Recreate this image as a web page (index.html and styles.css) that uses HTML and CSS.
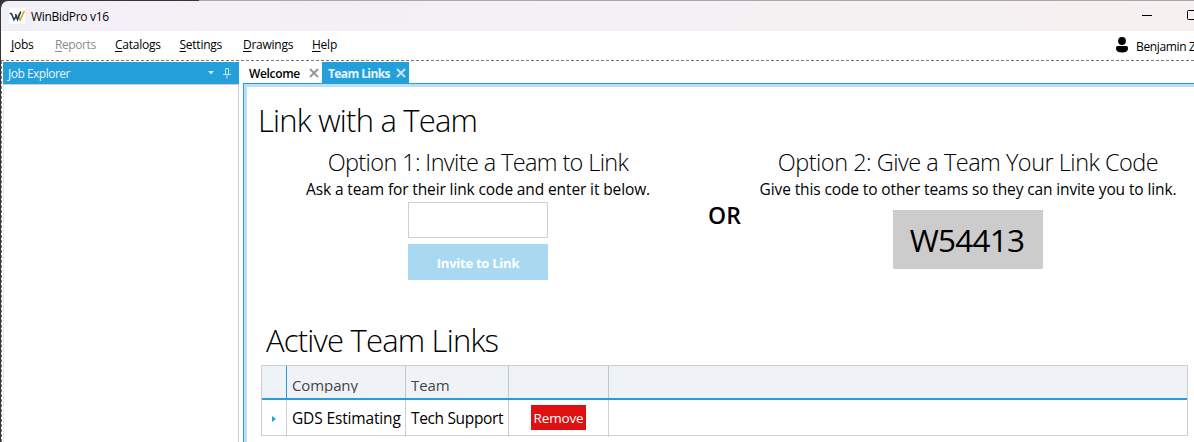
FILE: index.html
```
<!DOCTYPE html>
<html lang="en">
<head>
<meta charset="utf-8">
<title>WinBidPro v16</title>
<link rel="stylesheet" href="styles.css">
</head>
<body>
<div class="window">
  <header class="titlebar">
    <svg class="logo" width="16" height="16" viewBox="0 0 16 16"><rect width="16" height="16" fill="#fff"/><path d="M8.800 8.500l2.200 3.500L15.300 3M10.500 5.500l-1.500 3" fill="none" stroke="#d3ab1c" stroke-width="1.700"/><path d="M.7 5.500h1.600l2.700 6.300L7.700 7.200 M6.500 6l2 5.500L11.800 3.500" fill="none" stroke="#173c5c" stroke-width="1.600"/></svg>
    <span class="app-name"><span class="t">WinBidPro v16</span></span>
    <svg class="controls" width="52" height="30" viewBox="0 0 52 30" fill="none" stroke="#000"><path d="M0 14.500h10"/><rect x="45.500" y="9.500" width="9" height="9" rx="1"/></svg>
  </header>
  <nav class="menu">
    <a class="m-jobs"><u>J</u>obs</a>
    <a class="m-reports"><u>R</u>eports</a>
    <a class="m-catalogs"><u>C</u>atalogs</a>
    <a class="m-settings"><u>S</u>ettings</a>
    <a class="m-drawings"><u>D</u>rawings</a>
    <a class="m-help"><u>H</u>elp</a>
    <div class="user">
      <svg width="12" height="16" viewBox="0 0 12 16"><circle cx="6" cy="4" r="3.900"/><path d="M1.500 9h9q1.500 0 1.500 2.200Q12 15.500 6 15.500T0 11.200Q0 9 1.500 9z"/></svg>
      <span class="t">Benjamin Z</span>
    </div>
  </nav>
  <main class="workspace">
    <aside class="explorer">
      <div class="explorer-head">
        <span class="t">Job Explorer</span>
        <svg width="30" height="22" viewBox="0 0 30 22"><path d="M3 9h6l-3 3.500z" fill="#c3e5f7"/><path d="M20.500 12.500v-6h3v6M18 12.500h8M22 12.500v4M23.500 7v6" fill="none" stroke="#c3e5f7"/></svg>
      </div>
      <div class="explorer-body"></div>
    </aside>
    <section class="documents">
      <div class="tabs">
        <div class="tab"><span class="t">Welcome</span><svg width="10" height="10" viewBox="0 0 10 10"><path d="M1 1l8 8M9 1L1 9"/></svg></div>
        <div class="tab active"><span class="t">Team Links</span><svg width="10" height="10" viewBox="0 0 10 10"><path d="M1 1l8 8M9 1L1 9"/></svg></div>
      </div>
      <div class="page">
        <h1 class="title">Link with a Team</h1>
        <div class="options">
          <div class="option invite">
            <h2>Option 1: Invite a Team to Link</h2>
            <p>Ask a team for their link code and enter it below.</p>
            <input class="code-input" type="text" aria-label="Link code">
            <button class="invite-button">Invite to Link</button>
          </div>
          <div class="or">OR</div>
          <div class="option share">
            <h2>Option 2: Give a Team Your Link Code</h2>
            <p>Give this code to other teams so they can invite you to link.</p>
            <div class="code">W54413</div>
          </div>
        </div>
        <h1 class="title links-title">Active Team Links</h1>
        <div class="grid">
          <div class="row head"><div class="corner"></div><div><span class="clip">Company</span></div><div><span class="clip">Team</span></div><div></div><div></div></div>
          <div class="row body"><div class="marker"><svg width="4" height="6" viewBox="0 0 4 6"><path d="M0 0l4 3-4 3z" fill="#259fda"/></svg></div><div class="company">GDS Estimating</div><div class="team">Tech Support</div><div class="action"><button class="remove">Remove</button></div><div></div></div>
        </div>
      </div>
    </section>
  </main>
</div>
</body>
</html>
```
FILE: styles.css
```
* { box-sizing: border-box; }
body { margin: 0; width: 1194px; height: 442px; overflow: hidden; background: #37343a; font-family: "Open Sans", "Noto Sans", sans-serif; color: #000; }
h1, h2, p { margin: 0; font-weight: 300; white-space: nowrap; }
button, input { font-family: inherit; border: 0; padding: 0; }
.window { height: 442px; display: flex; flex-direction: column; margin-left: 1px; background: linear-gradient(90deg, #37343a 198px, #aaa7ae 198px); border-top-left-radius: 8px; overflow: hidden; padding-top: 1px; }
.titlebar { height: 30px; flex: none; display: flex; align-items: center; padding-left: 8px; background: linear-gradient(90deg, #f2f0f7, #f6f0f0); border-top-left-radius: 7px; font-size: 12px; }
.app-name { margin-left: 6px; letter-spacing: -0.3px; white-space: nowrap; }
.controls { margin-left: auto; }
.menu { height: 30px; flex: none; display: flex; padding-top: 4px; line-height: 19px; font-size: 12px; background: #fff; border-bottom: 1px dashed #77777b; white-space: nowrap; }
.menu u { text-underline-offset: 2px; }
.menu a { flex: none; letter-spacing: -0.25px; }
.m-jobs { width: 44px; margin-left: 10px; }
.menu .m-reports { width: 60px; color: #8d8d8d; letter-spacing: -0.4px; }
.m-catalogs { width: 65px; }
.m-settings { width: 64px; }
.m-drawings { width: 69px; }
.menu .m-settings, .menu .m-drawings { margin-left: -0.5px; }
.user { display: flex; gap: 8px; margin-left: auto; width: 78px; padding-top: 2px; letter-spacing: -0.35px; }
.user svg { flex: none; }
.workspace { flex: 1; display: flex; padding: 1px 0 0 1px; background: #fff; border-left: 1px dashed #77777b; min-height: 0; }
.explorer { width: 236px; flex: none; display: flex; flex-direction: column; }
.explorer-head { height: 22px; background: #259fda; color: #e6f5fc; font-size: 12px; display: flex; align-items: center; justify-content: space-between; padding: 0 4px 0 5px; letter-spacing: -0.5px; }
.explorer-body { flex: 1; border: 1px solid #cfcfcf; border-bottom: 0; border-left-color: #e8e8e8; }
.documents { flex: 1; margin-left: 4px; display: flex; flex-direction: column; min-width: 0; }
.tabs { display: flex; height: 21px; font-size: 12px; font-weight: 600; }
.tab { width: 79px; padding: 0 3px 0 6px; display: flex; align-items: center; justify-content: space-between; white-space: nowrap; letter-spacing: -0.35px; }
.tab .t { padding-top: 1px; }
.tab.active { width: 87px; background: #259fda; color: #e6f5fc; letter-spacing: -0.9px; font-weight: 700; }
.tab.active { letter-spacing: -0.6px; }
.tab svg { stroke: #999; stroke-width: 2; }
.tab.active svg { stroke: #c3e5f7; }
.page { flex: 1; border: 1px solid #259fda; border-right: 0; border-bottom: 0; box-shadow: inset 3px 3px #b9e0f4; padding: 14px 0 0 14px; }
.title { font-size: 31px; line-height: 45px; letter-spacing: -0.8px; }
.options { height: 172px; display: flex; }
.option { display: flex; flex-direction: column; align-items: center; }
.option h2 { font-size: 23.5px; line-height: 34px; margin-top: 2px; letter-spacing: -0.63px; }
.option p { font-size: 15.5px; line-height: 20px; font-weight: 400; letter-spacing: -0.12px; }
.option.share h2 { letter-spacing: -0.5px; }
.invite { width: 440px; }
.share { width: 434px; }
.or { width: 53px; padding-top: 56px; text-align: center; font-size: 23px; line-height: 32px; font-weight: 600; }
.code-input { width: 140px; height: 36px; margin-top: 3px; border: 1px solid #cfcfcf; }
.invite-button { width: 140px; height: 36px; margin-top: 6px; padding-top: 2px; background: #a9d9f1; color: #fff; font-size: 13px; font-weight: 700; letter-spacing: -0.25px; }
.code { width: 150px; height: 59px; margin-top: 11px; padding-right: 2px; background: #ccc; font-size: 31.5px; line-height: 60px; text-align: center; letter-spacing: -0.75px; }
.links-title { margin-left: 8px; height: 50px; line-height: 50px; }
.grid { width: 927px; margin-left: 3px; border: 1px solid #cfcfcf; font-size: 15px; }
.row { display: grid; grid-template-columns: 25px 119px 103px 100px 1fr; }
.row > div { border-right: 1px solid #cfcfcf; padding-left: 5px; white-space: nowrap; }
.row > div:last-child { border-right: 0; }
.row .corner { border-right-color: #259fda; }
.head { height: 34px; background: #eff3f8; border-bottom: 2px solid #259fda; color: #444; }
.head > div { border-right-color: #b9c9d2; padding-top: 9px; }
.clip { display: block; height: 18px; overflow: hidden; line-height: 20px; font-size: 15px; letter-spacing: -0.1px; }
.body { height: 35px; line-height: 37px; }
.body > .marker { padding: 0 0 0 10px; display: flex; align-items: center; }
.company { font-size: 15.5px; letter-spacing: -0.15px; }
.team { font-size: 15.5px; letter-spacing: -0.35px; }
.row > .action { padding: 5px 0 0 22px; line-height: 0; }
.remove { width: 55px; height: 25px; background: #df1012; color: #fff; font-size: 13.5px; letter-spacing: -0.15px; }
```
